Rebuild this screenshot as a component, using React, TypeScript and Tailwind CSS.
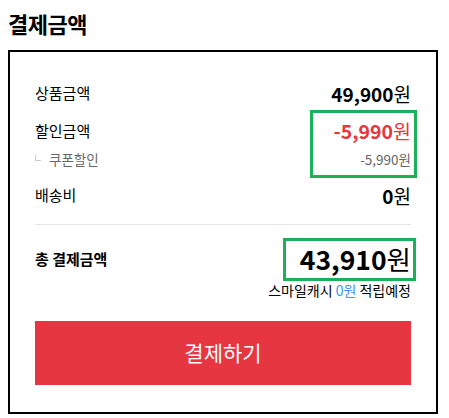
const font = { fontFamily: '"Noto Sans CJK KR", "Noto Sans", sans-serif' };

function Won({ value, className }: { value: string; className: string }) {
  return (
    <span className={`flex items-baseline ${className}`}>
      <span className="font-bold">{value}</span>
      <span className="font-normal">원</span>
    </span>
  );
}

export default function App() {
  return (
    <div className="w-[449px] h-[418px] bg-white text-black" style={font}>
      <h2 className="px-[8px] pt-[9px] text-[22px] font-bold leading-[28px] tracking-[-0.5px]">결제금액</h2>

      <div className="mx-[8px] mt-[13px] w-[430px] border-2 border-black px-[25px] pt-[28px] pb-[27px]">
        <div className="flex h-[26px] items-center justify-between">
          <span className="text-[15px]">상품금액</span>
          <Won value="49,900" className="text-[19px] leading-none" />
        </div>

        <div className="relative mt-[12px]">
          <div className="flex h-[26px] items-center justify-between">
            <span className="text-[15px]">할인금액</span>
            <Won value="-5,990" className="text-[19.5px] leading-none text-[#e8363f]" />
          </div>
          <div className="mt-[5px] flex h-[20px] items-center justify-between">
            <span className="flex items-center text-[13.5px] text-[#666]">
              <span className="mr-[8px] mb-[2px] inline-block h-[6px] w-[6px] border-b border-l border-[#ccc]" />
              쿠폰할인
            </span>
            <span className="text-[13.5px] text-[#666]">-5,990원</span>
          </div>
          <div className="absolute top-[-8px] right-[-6px] h-[68px] w-[107px] border-[3px] border-[#1bb15a]" />
        </div>

        <div className="mt-[13px] flex h-[26px] items-center justify-between">
          <span className="text-[15px]">배송비</span>
          <Won value="0" className="text-[19px] leading-none" />
        </div>

        <div className="mt-[16px] h-px bg-[#e5e5e5]" />

        <div className="relative mt-[19px] flex h-[30px] items-center justify-between">
          <span className="text-[15px] font-bold">총 결제금액</span>
          <Won value="43,910" className="text-[26.5px] leading-none" />
          <div className="absolute top-[-6px] right-[-5px] h-[43px] w-[133px] border-[3px] border-[#1bb15a]" />
        </div>

        <div className="mt-[7px] flex h-[18px] items-center justify-end text-[14px]">
          스마일캐시&nbsp;<span className="text-[#4a8ff0]">0원</span>&nbsp;적립예정
        </div>

        <button className="mt-[22px] flex h-[64px] w-full items-center justify-center bg-[#e53641] text-[21px] text-white">
          결제하기
        </button>
      </div>
    </div>
  );
}
